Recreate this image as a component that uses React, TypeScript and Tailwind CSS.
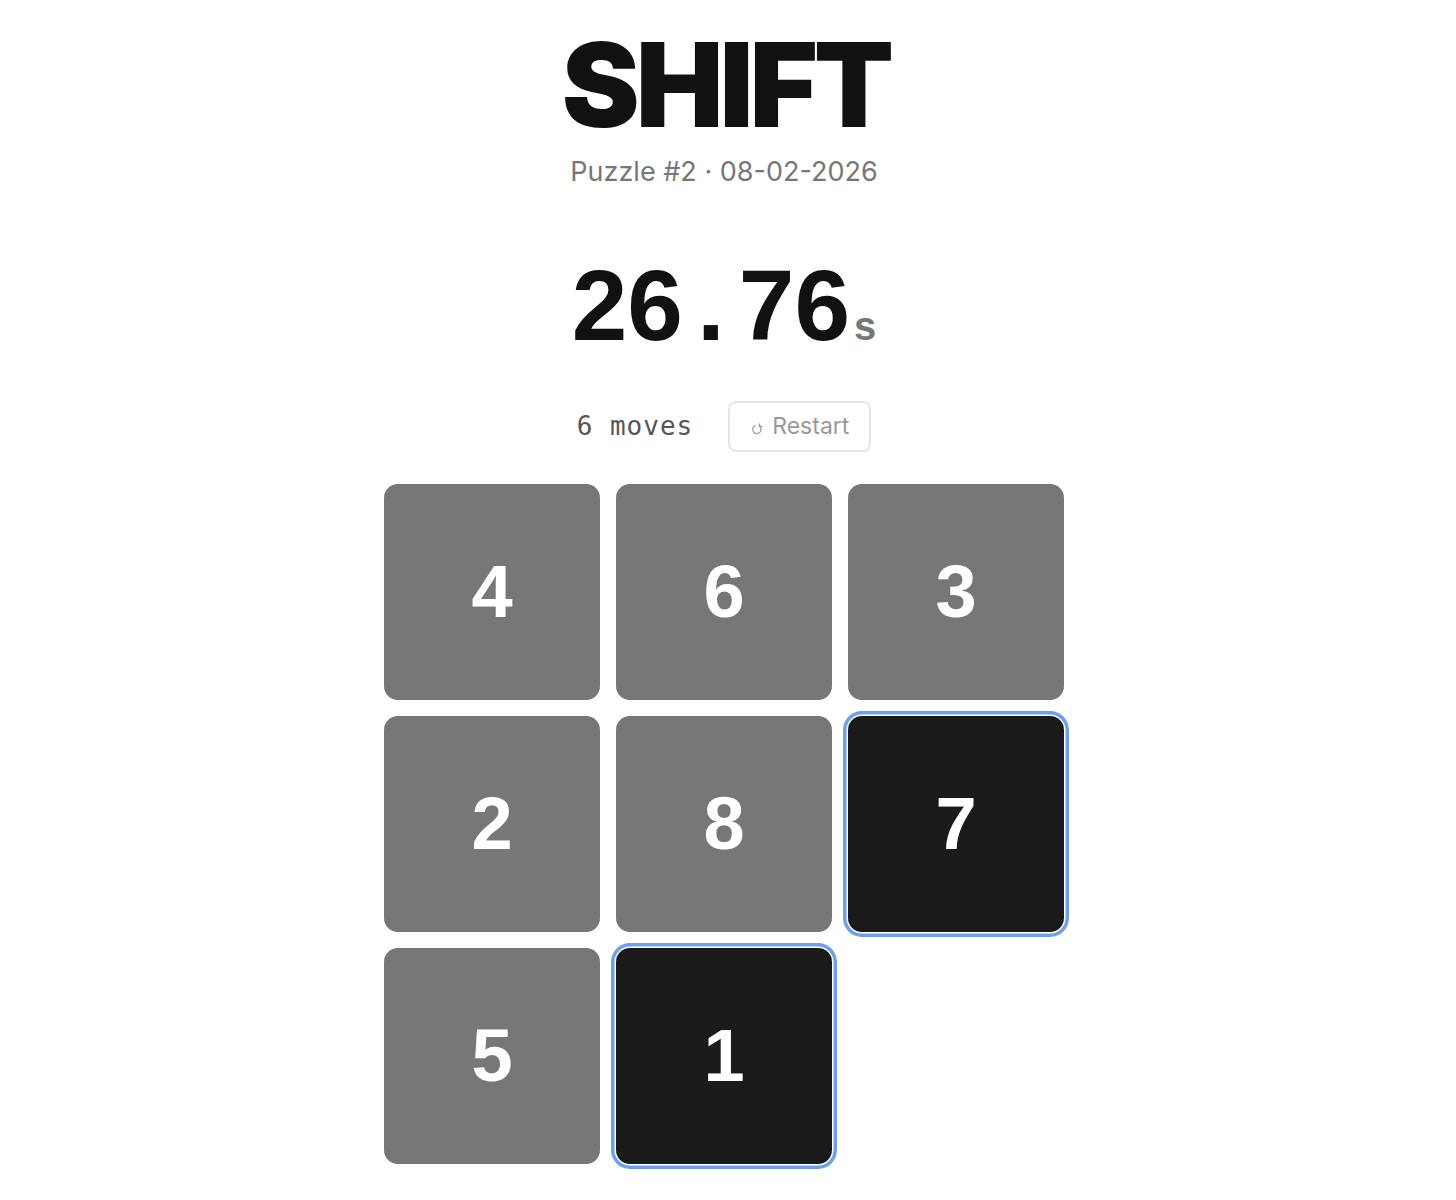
import React from 'react';

type Tile = { n: number | null; active?: boolean };

const tiles: Tile[] = [
  { n: 4 },
  { n: 6 },
  { n: 3 },
  { n: 2 },
  { n: 8 },
  { n: 7, active: true },
  { n: 5 },
  { n: 1, active: true },
  { n: null },
];

function RestartIcon() {
  return (
    <svg width="12" height="12" viewBox="0 0 12 12" fill="none" className="mt-[4px]">
      <path d="M4 2.6 A4.2 4.2 0 1 0 8.4 3" stroke="#999" strokeWidth="1.2" strokeLinecap="round" />
      <path d="M8.6 0.8 L8.4 3.2 L10.8 3.4" stroke="#999" strokeWidth="1.2" strokeLinecap="round" strokeLinejoin="round" />
    </svg>
  );
}

export default function App() {
  return (
    <div className="min-h-screen bg-white flex flex-col items-center pr-[8px] text-[#111]">
      <h1 className="mt-[26px] pl-[4px] text-[117px] leading-none font-black tracking-[-4px] font-['Inter',sans-serif]">
        SHIFT
      </h1>
      <p className="mt-[15px] text-[27px] leading-none text-[#777] font-['Inter',sans-serif]">
        Puzzle #2 · 08-02-2026
      </p>

      <div className="mt-[70px] flex items-baseline font-['Liberation_Sans',Arial,sans-serif] font-bold leading-none">
        <span className="text-[100px]">26</span>
        <span className="text-[100px] mx-[14px]">.</span>
        <span className="text-[100px]">76</span>
        <span className="text-[40px] text-[#777] ml-[4px]">s</span>
      </div>

      <div className="mt-[46px] flex items-center gap-[35px]">
        <span className="font-['DejaVu_Sans_Mono',monospace] text-[26px] text-[#555] tracking-[1px]">
          6 moves
        </span>
        <button className="h-[51px] pl-[21px] pr-[20px] rounded-[8px] border-2 border-[#e6e6e6] bg-white flex items-center gap-[9px] text-[#999] font-['Inter',sans-serif] text-[23px]">
          <RestartIcon />
          Restart
        </button>
      </div>

      <div className="mt-[32px] grid grid-cols-3 gap-[16px]">
        {tiles.map((t, i) =>
          t.n === null ? (
            <div key={i} className="w-[216px] h-[216px]" />
          ) : (
            <div
              key={i}
              className={
                t.active
                  ? 'w-[216px] h-[216px] rounded-[14px] bg-[#1a1a1a] flex items-center justify-center shadow-[0_0_0_1.5px_#ffffff,0_0_0_5px_#6ca0ee]'
                  : 'w-[216px] h-[216px] rounded-[14px] bg-[#777777] flex items-center justify-center'
              }
            >
              <span className="text-white font-bold text-[74px] leading-none font-['Liberation_Sans',Arial,sans-serif]">
                {t.n}
              </span>
            </div>
          )
        )}
      </div>
      <div className="h-[40px]" />
    </div>
  );
}
